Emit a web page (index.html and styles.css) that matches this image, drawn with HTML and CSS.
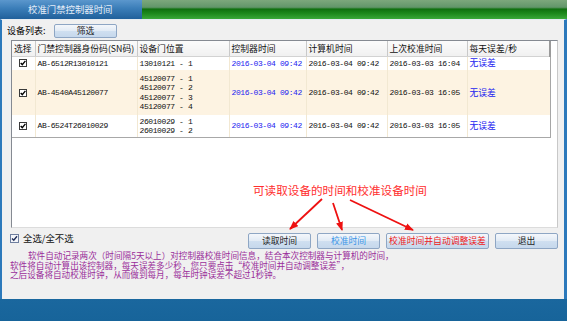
FILE: index.html
```html
<!DOCTYPE html>
<html lang="zh-CN">
<head>
<meta charset="utf-8">
<title>校准门禁控制器时间</title>
<link rel="stylesheet" href="styles.css">
</head>
<body>
<div class="window">
  <div class="titlebar">
    <div class="title-tab">校准门禁控制器时间</div>
    <div class="title-fill"></div>
  </div>
  <div class="client">
    <div class="toolbar">
      <span class="label">设备列表:</span>
      <button class="btn btn-filter">筛选</button>
    </div>
    <div class="listview">
      <table class="grid">
        <colgroup>
          <col class="c1"><col class="c2"><col class="c3"><col class="c4"><col class="c5"><col class="c6"><col class="c7">
        </colgroup>
        <thead>
          <tr>
            <th>选择</th><th>门禁控制器身份码(SN码)</th><th>设备门位置</th><th>控制器时间</th><th>计算机时间</th><th>上次校准时间</th><th>每天误差/秒</th>
          </tr>
        </thead>
        <tbody>
          <tr class="row r1">
            <td class="chk"><svg class="cb" viewBox="0 0 8 8" width="8" height="8"><rect x="0.5" y="0.5" width="7" height="7" fill="#fff" stroke="#3a3a3a"/><path d="M1.7 3.9 L3.3 5.6 L6.4 1.9" fill="none" stroke="#000" stroke-width="1.4"/></svg></td>
            <td class="mono">AB-6512R13010121</td>
            <td class="mono"><div>13010121 - 1</div></td>
            <td class="mono blue">2016-03-04 09:42</td>
            <td class="mono">2016-03-04 09:42</td>
            <td class="mono">2016-03-03 16:04</td>
            <td class="cn blue">无误差</td>
          </tr>
          <tr class="row r2">
            <td class="chk"><svg class="cb" viewBox="0 0 8 8" width="8" height="8"><rect x="0.5" y="0.5" width="7" height="7" fill="#fff" stroke="#3a3a3a"/><path d="M1.7 3.9 L3.3 5.6 L6.4 1.9" fill="none" stroke="#000" stroke-width="1.4"/></svg></td>
            <td class="mono">AB-4540A45120077</td>
            <td class="mono"><div>45120077 - 1</div><div>45120077 - 2</div><div>45120077 - 3</div><div>45120077 - 4</div></td>
            <td class="mono blue">2016-03-04 09:42</td>
            <td class="mono">2016-03-04 09:42</td>
            <td class="mono">2016-03-03 16:05</td>
            <td class="cn blue">无误差</td>
          </tr>
          <tr class="row r3">
            <td class="chk"><svg class="cb" viewBox="0 0 8 8" width="8" height="8"><rect x="0.5" y="0.5" width="7" height="7" fill="#fff" stroke="#3a3a3a"/><path d="M1.7 3.9 L3.3 5.6 L6.4 1.9" fill="none" stroke="#000" stroke-width="1.4"/></svg></td>
            <td class="mono">AB-6524T26010029</td>
            <td class="mono"><div>26010029 - 1</div><div>26010029 - 2</div></td>
            <td class="mono blue">2016-03-04 09:42</td>
            <td class="mono">2016-03-04 09:42</td>
            <td class="mono">2016-03-03 16:05</td>
            <td class="cn blue">无误差</td>
          </tr>
        </tbody>
      </table>
    </div>
    <div class="controls">
      <label class="selall">
        <svg class="cb-all" viewBox="0 0 9 9" width="9" height="9"><rect x="0.5" y="0.5" width="8" height="8" fill="#f4f6fa" stroke="#6f7f9f"/><path d="M2 4.4 L3.8 6.3 L7 2.3" fill="none" stroke="#22305a" stroke-width="1.4"/></svg>
        <span>全选/全不选</span>
      </label>
      <div class="buttons">
        <button class="btn b-read">读取时间</button>
        <button class="btn b-adjust">校准时间</button>
        <button class="btn b-auto">校准时间并自动调整误差</button>
        <button class="btn b-exit">退出</button>
      </div>
    </div>
    <div class="desc">
      <p class="indent">软件自动记录两次（时间隔5天以上）对控制器校准时间信息，结合本次控制器与计算机的时间，</p>
      <p>软件将自动计算出该控制器，每天误差多少秒，您只要点击“校准时间并自动调整误差”，</p>
      <p>之后设备将自动校准时钟，从而做到每月，每年时钟误差不超过1秒钟。</p>
    </div>
  </div>
  <div class="taskstrip"></div>

  <div class="annot">可读取设备的时间和校准设备时间</div>
  <svg class="arrows" viewBox="0 0 567 321" width="567" height="321">
    <defs>
      <marker id="ah" markerWidth="9" markerHeight="7" refX="8" refY="3.5" orient="auto" markerUnits="userSpaceOnUse">
        <path d="M0,0 L9,3.5 L0,7 z" fill="#ee1111"/>
      </marker>
    </defs>
    <line x1="322" y1="199" x2="290" y2="229" stroke="#ee1111" stroke-width="1.8" marker-end="url(#ah)"/>
    <line x1="333" y1="203" x2="342" y2="230" stroke="#ee1111" stroke-width="1.8" marker-end="url(#ah)"/>
    <line x1="350" y1="200" x2="413" y2="230" stroke="#ee1111" stroke-width="1.8" marker-end="url(#ah)"/>
  </svg>
</div>
</body>
</html>
```
FILE: styles.css
```css
* { box-sizing: border-box; margin: 0; padding: 0; }
html, body { width: 567px; height: 321px; overflow: hidden; }
body { background: #19669c; font-family: "Noto Sans CJK SC", "Noto Sans", sans-serif; color: #000; }

.window {
  position: relative;
  width: 567px;
  height: 321px;
  display: flex;
  flex-direction: column;
  background: #19669c;
}

.titlebar { display: flex; height: 19px; flex: none; }
.title-tab {
  width: 142px;
  background: linear-gradient(#5b97cd, #3a7db8 45%, #20609b);
  color: #e4edf8;
  font-size: 9.4px;
  line-height: 19px;
  padding-left: 28px;
  white-space: nowrap;
}
.title-fill {
  flex: 1;
  background: linear-gradient(#7ca87c 0%, #62966a 38%, #0f700f 48%, #1c881c 70%, #3aa83a 100%);
}

.client {
  height: 280px;
  flex: none;
  background: #f0f0f0;
  border-left: 2px solid #2c79bb;
  border-right: 3px solid #2c79bb;
  border-top: 1px solid #e6ecf2;
  display: flex;
  flex-direction: column;
}

.toolbar {
  display: flex;
  align-items: center;
  height: 14px;
  margin-top: 4px;
  padding-left: 5px;
}
.label { font-size: 9px; line-height: 14px; width: 47px; white-space: nowrap; }

.btn {
  font-family: "Noto Sans CJK SC", sans-serif;
  font-size: 8.8px;
  line-height: 1;
  border: 1px solid #8ea6c4;
  border-radius: 2px;
  background: linear-gradient(#f4f7fb, #e2ebf5 48%, #cfdff0 52%, #c6d8ec);
  color: #1e1e1e;
  display: flex;
  align-items: center;
  justify-content: center;
  white-space: nowrap;
}
.btn-filter { width: 63px; height: 14px; }

.listview {
  margin-top: 2px;
  margin-left: 9px;
  width: 547px;
  height: 188px;
  border: 1px solid #858a92;
  border-right-color: #c8c8c8;
  border-bottom-color: #dcdcdc;
  background: #fff;
  flex: none;
}

.grid {
  border-collapse: collapse;
  table-layout: fixed;
  width: 538px;
}
.c1 { width: 23px; } .c2 { width: 102px; } .c3 { width: 92px; } .c4 { width: 77px; }
.c5 { width: 81px; } .c6 { width: 80px; } .c7 { width: 83px; }

.grid th {
  height: 15px;
  font-size: 8.8px;
  font-weight: normal;
  text-align: left;
  padding: 0 0 0 2px;
  white-space: nowrap;
  overflow: hidden;
  background: linear-gradient(#fbfbfb, #f0f0f0);
  border-right: 1px solid #c9c9c9;
  border-bottom: 1px solid #d2d2d2;
  color: #111;
}
.grid th:last-child { border-right: 2px solid #9a9a9a; }

.grid td {
  padding: 0 0 0 2px;
  vertical-align: middle;
  white-space: nowrap;
  overflow: hidden;
  border-right: 1px solid #f2e8d2;
}
.grid td:last-child { border-right: 1px solid #a6a6a6; }
.grid tbody tr:last-child td { border-bottom: 1px solid #a8a8a8; }

.r1 { height: 14px; }
.r2 { height: 45px; background: #fdf3e2; }
.r3 { height: 22px; }

.chk { text-align: center; padding: 0 !important; }
.cb { display: block; margin: 0 auto; }

.mono {
  font-family: "Liberation Mono", monospace;
  font-size: 8px;
  letter-spacing: -0.4px;
  line-height: 9.2px;
  color: #111;
}
.cn { font-size: 8.8px; line-height: 10px; }
.blue { color: #2424f0; }

.controls {
  display: flex;
  justify-content: space-between;
  align-items: flex-start;
  height: 16px;
  margin-top: 5px;
  padding-left: 8px;
  padding-right: 6px;
}
.selall {
  display: flex;
  align-items: center;
  gap: 4px;
  font-size: 9.4px;
  line-height: 9px;
  margin-top: 1px;
  color: #111;
}
.cb-all { display: block; }
.buttons { display: flex; gap: 6px; }
.buttons .btn { height: 16px; }
.b-read { width: 63px; }
.b-adjust { width: 63px; color: #3a96e8; }
.b-auto { width: 103px; color: #ee2020; }
.b-exit { width: 63px; }

.desc {
  margin-top: 2px;
  padding-left: 8px;
  font-size: 8.6px;
  line-height: 9.6px;
  color: #9a2e9a;
  white-space: nowrap;
}
.desc .indent { padding-left: 18px; }

.taskstrip { flex: 1; background: linear-gradient(#1a679e, #17649a); }

.annot {
  position: absolute;
  left: 253px;
  top: 183px;
  font-size: 11.6px;
  line-height: 14px;
  color: #ff2e2e;
  white-space: nowrap;
}
.arrows { position: absolute; left: 0; top: 0; pointer-events: none; }
```
